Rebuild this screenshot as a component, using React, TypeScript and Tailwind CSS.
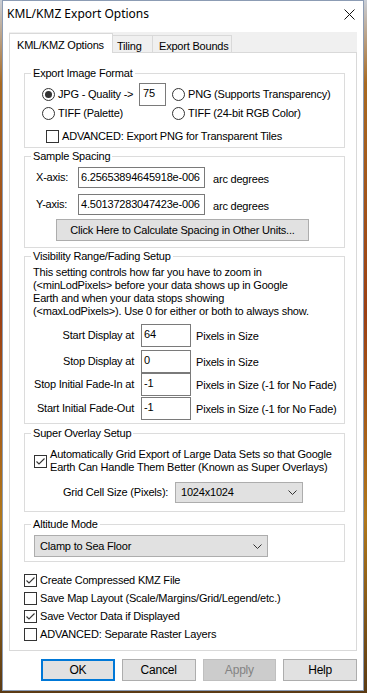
import React from 'react';

const Radio: React.FC<{ on?: boolean }> = ({ on }) => (
  <span className="w-[13px] h-[13px] rounded-full border border-[#333] bg-white flex items-center justify-center shrink-0">
    {on && <span className="w-[7px] h-[7px] rounded-full bg-[#333]" />}
  </span>
);

const Check: React.FC<{ on?: boolean }> = ({ on }) => (
  <span className="w-[13px] h-[13px] border border-[#333] bg-white flex items-center justify-center shrink-0">
    {on && (
      <svg width="11" height="11" viewBox="0 0 11 11">
        <path d="M1.5 5.5 L4 8 L9.5 2.5" fill="none" stroke="#333" strokeWidth="1.1" />
      </svg>
    )}
  </span>
);

const Box: React.FC<{ value: string; className?: string }> = ({ value, className }) => (
  <div className={`border border-[#7a7a7a] bg-white flex items-center leading-[13px] shrink-0 ${className ?? ''}`}>{value}</div>
);

const Combo: React.FC<{ value: string; className?: string }> = ({ value, className }) => (
  <div className={`border border-[#adadad] bg-[#e1e1e1] flex items-center justify-between pl-[5px] pr-[5px] shrink-0 ${className ?? ''}`}>
    <span>{value}</span>
    <svg width="9" height="5" viewBox="0 0 9 5">
      <path d="M0.5 0.5 L4.5 4.5 L8.5 0.5" fill="none" stroke="#333" strokeWidth="1" />
    </svg>
  </div>
);

// group box: legend sits on the top border, inner div carries the padding
const Group: React.FC<{ title: string; className?: string; inner?: string; children: React.ReactNode }> = ({ title, className, inner, children }) => (
  <fieldset className={`border border-[#dcdcdc] ${className ?? ''}`}>
    <legend className="ml-[6px] px-[2px] leading-[13px]">{title}</legend>
    <div className={inner}>{children}</div>
  </fieldset>
);

const Btn: React.FC<{ label: string; kind?: 'default' | 'disabled' }> = ({ label, kind }) => {
  const cls =
    kind === 'default'
      ? 'border-2 border-[#0078d7] bg-[#e1e1e1] text-black'
      : kind === 'disabled'
      ? 'border border-[#bfbfbf] bg-[#cccccc] text-[#838383]'
      : 'border border-[#adadad] bg-[#e1e1e1] text-black';
  return <div className={`w-[74px] h-[22px] flex items-center justify-center ${cls}`}>{label}</div>;
};

export default function App() {
  return (
    <div className="w-[367px] h-[693px] overflow-hidden bg-[linear-gradient(180deg,#c9ced6_0%,#a86a22_12%,#9b3f14_45%,#b0781c_75%,#5a3a14_100%)] font-['Liberation_Sans',Arial,sans-serif] text-[11px] tracking-[-0.2px] text-black">
      <div className="ml-[2px] w-[362px] h-[691px] border border-[#8c9cb4] bg-white flex flex-col">
        {/* title bar */}
        <div className="h-[31px] flex items-start justify-between pl-[4px] pr-[8px] pt-[3px] shrink-0">
          <span className="font-['Noto_Sans',sans-serif] text-[12px] tracking-normal leading-[20px]">KML/KMZ Export Options</span>
          <svg width="11" height="11" viewBox="0 0 11 11" className="mt-[5px]">
            <path d="M0.5 0.5 L10.5 10.5 M10.5 0.5 L0.5 10.5" stroke="#111" strokeWidth="1" />
          </svg>
        </div>

        <div className="px-[6px] flex flex-col">
          {/* tabs */}
          <div className="h-[20px] bg-[#f0f0f0] flex items-end">
            <div className="w-[104px] h-[20px] -mb-px relative z-10 bg-white border border-b-0 border-[#d9d9d9] pl-[7px] pt-[3px]">KML/KMZ Options</div>
            <div className="w-[40px] h-[17px] border-t border-r border-[#d9d9d9] pl-[4px] pt-[2px]">Tiling</div>
            <div className="w-[79px] h-[17px] border-t border-r border-[#d9d9d9] pl-[6px] pt-[2px]">Export Bounds</div>
          </div>

          {/* pane */}
          <div className="border border-[#d9d9d9] bg-white pl-[14px] pr-[11px] pt-[14px] pb-[7px] flex flex-col">
            <Group title="Export Image Format" inner="pl-[17px] pt-[3px] pb-[4px]">
              <div className="h-[22px] flex items-center">
                <div className="w-[97px] flex items-center gap-[3px]">
                  <Radio on />
                  <span>JPG - Quality -&gt;</span>
                </div>
                <Box value="75" className="w-[27px] h-[23px] pl-[3px] pb-[2px]" />
                <div className="ml-[6px] flex items-center gap-[3px]">
                  <Radio />
                  <span>PNG (Supports Transparency)</span>
                </div>
              </div>
              <div className="h-[14px] mt-[1px] flex items-center">
                <div className="w-[130px] flex items-center gap-[3px]">
                  <Radio />
                  <span>TIFF (Palette)</span>
                </div>
                <div className="flex items-center gap-[3px]">
                  <Radio />
                  <span>TIFF (24-bit RGB Color)</span>
                </div>
              </div>
              <div className="h-[13px] mt-[10px] ml-[4px] flex items-center gap-[3px]">
                <Check />
                <span>ADVANCED: Export PNG for Transparent Tiles</span>
              </div>
            </Group>

            <Group title="Sample Spacing" className="mt-[2px]" inner="pl-[11px] pt-[4px] pb-[6px]">
              <div className="flex items-center">
                <span className="w-[42px]">X-axis:</span>
                <Box value="6.25653894645918e-006" className="w-[127px] h-[21px] pl-[2px]" />
                <span className="ml-[8px] mt-[3px]">arc degrees</span>
              </div>
              <div className="flex items-center mt-[6px]">
                <span className="w-[42px]">Y-axis:</span>
                <Box value="4.50137283047423e-006" className="w-[127px] h-[21px] pl-[2px]" />
                <span className="ml-[8px] mt-[3px]">arc degrees</span>
              </div>
              <div className="ml-[20px] mt-[4px] w-[253px] h-[22px] border border-[#adadad] bg-[#e1e1e1] flex items-center justify-center">
                Click Here to Calculate Spacing in Other Units...
              </div>
            </Group>

            <Group title="Visibility Range/Fading Setup" className="mt-[2px]" inner="pt-[3px] pb-[3px]">
              <p className="pl-[8px] leading-[13px]">
                This setting controls how far you have to zoom in
                <br />
                (&lt;minLodPixels&gt; before your data shows up in Google
                <br />
                Earth and when your data stops showing
                <br />
                (&lt;maxLodPixels&gt;). Use 0 for either or both to always show.
              </p>
              {[
                { l: 'Start Display at', v: '64', t: 'Pixels in Size', mt: 'mt-[6px]' },
                { l: 'Stop Display at', v: '0', t: 'Pixels in Size', mt: 'mt-[3px]' },
                { l: 'Stop Initial Fade-In at', v: '-1', t: 'Pixels in Size (-1 for No Fade)', mt: 'mt-0' },
                { l: 'Start Initial Fade-Out', v: '-1', t: 'Pixels in Size (-1 for No Fade)', mt: 'mt-[1px]' },
              ].map((r) => (
                <div key={r.l} className={`flex items-center h-[23px] ${r.mt}`}>
                  <span className="w-[109px] text-right">{r.l}</span>
                  <Box value={r.v} className="ml-[7px] w-[50px] h-[23px] pl-[2px] pb-[3px]" />
                  <span className="ml-[5px] mt-[2px]">{r.t}</span>
                </div>
              ))}
            </Group>

            <Group title="Super Overlay Setup" className="mt-[3px]" inner="pl-[9px] pt-[8px] pb-[8px]">
              <div className="flex items-center gap-[3px]">
                <Check on />
                <span className="leading-[13px]">
                  Automatically Grid Export of Large Data Sets so that Google
                  <br />
                  Earth Can Handle Them Better (Known as Super Overlays)
                </span>
              </div>
              <div className="flex items-center mt-[8px] pl-[29px]">
                <span className="w-[112px] shrink-0 whitespace-nowrap">Grid Cell Size (Pixels):</span>
                <Combo value="1024x1024" className="w-[128px] h-[21px]" />
              </div>
            </Group>

            <Group title="Altitude Mode" className="mt-[6px]" inner="pl-[9px] pt-[4px] pb-[4px]">
              <Combo value="Clamp to Sea Floor" className="w-[234px] h-[22px]" />
            </Group>

            <div className="mt-[9px] flex flex-col">
              {[
                { on: true, t: 'Create Compressed KMZ File' },
                { on: false, t: 'Save Map Layout (Scale/Margins/Grid/Legend/etc.)' },
                { on: true, t: 'Save Vector Data if Displayed' },
                { on: false, t: 'ADVANCED: Separate Raster Layers' },
              ].map((c) => (
                <div key={c.t} className="h-[18px] flex items-center gap-[3px]">
                  <Check on={c.on} />
                  <span>{c.t}</span>
                </div>
              ))}
            </div>
          </div>

          {/* buttons */}
          <div className="mt-[8px] pl-[32px] flex gap-[7px] text-[12px]">
            <Btn label="OK" kind="default" />
            <Btn label="Cancel" />
            <Btn label="Apply" kind="disabled" />
            <Btn label="Help" />
          </div>
        </div>
      </div>
    </div>
  );
}
